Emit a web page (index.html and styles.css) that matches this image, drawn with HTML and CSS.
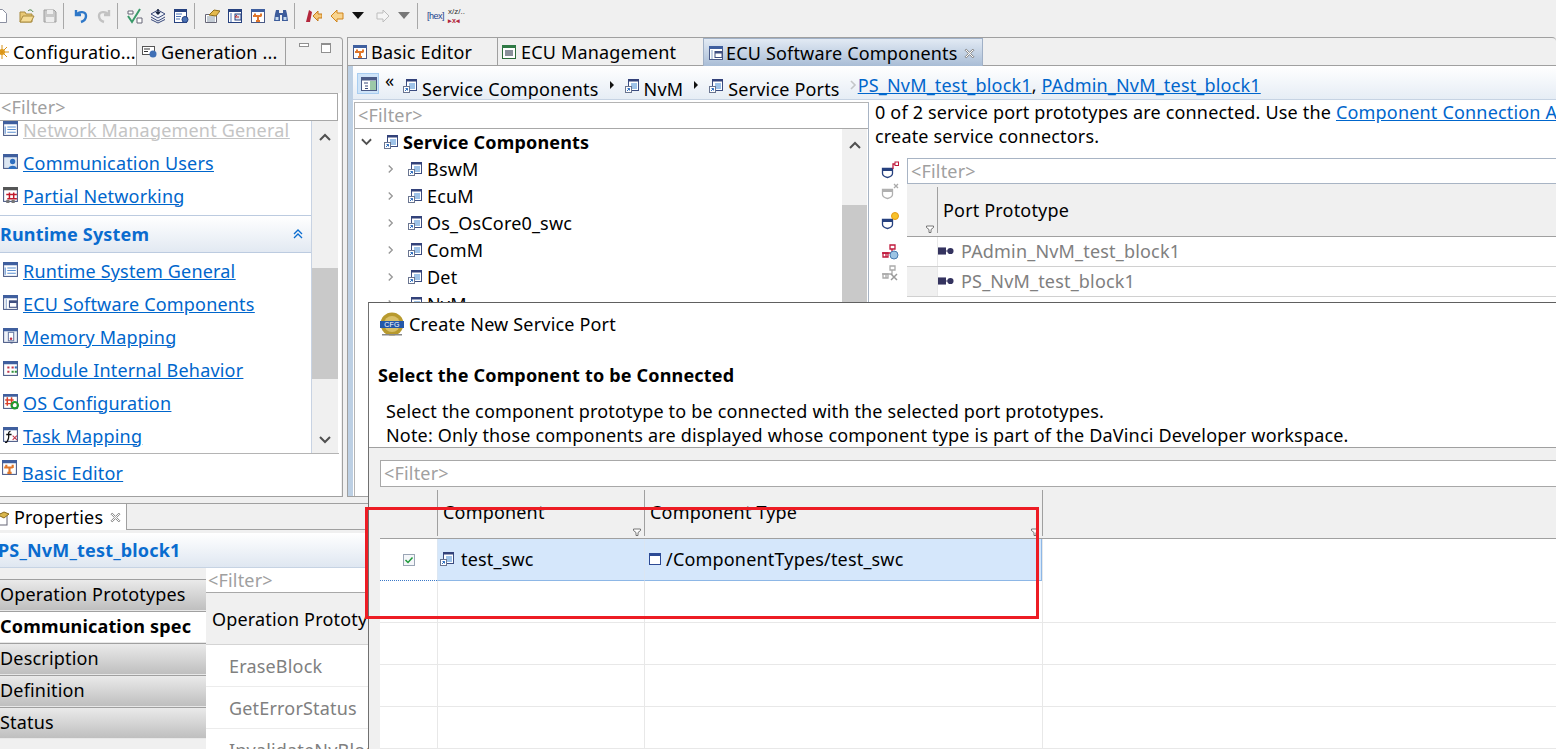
FILE: index.html
```html
<!DOCTYPE html>
<html lang="en">
<head>
<meta charset="utf-8">
<title>Create New Service Port</title>
<link rel="stylesheet" href="styles.css">
</head>
<body>
<svg class="defs" width="0" height="0" aria-hidden="true">
  <symbol id="win" viewBox="0 0 16 16"><rect x="1.500" y="1.500" width="13" height="13" fill="#fff" stroke="#4a5a86"/><rect x="1" y="1" width="14" height="3" fill="#3f5f9f"/><path d="M5 6.500h8M5 9h8M5 11.500h8M3 6v7" stroke="#5b8fd0" fill="none"/></symbol>
  <symbol id="users" viewBox="0 0 16 16"><rect x="1.500" y="1.500" width="13" height="13" fill="#dce6f2" stroke="#4a5a86"/><rect x="1" y="1" width="14" height="3" fill="#3f5f9f"/><circle cx="10" cy="8" r="2.500" fill="#2f6fc0"/><path d="M6 15c0-4 8-4 8 0z" fill="#2f6fc0"/></symbol>
  <symbol id="net" viewBox="0 0 16 16"><rect x="1.500" y="1.500" width="13" height="13" fill="#fff" stroke="#4a5a86"/><rect x="1" y="1" width="14" height="3" fill="#555"/><path d="M4 8h10M7 6v6M11 6v6M5 12h9" stroke="#c01a2c" fill="none" stroke-width="1.400"/><rect x="4" y="13" width="3" height="3" fill="#777"/><rect x="9" y="13" width="3" height="3" fill="#777"/></symbol>
  <symbol id="ecu" viewBox="0 0 16 16"><rect x="1.500" y="1.500" width="13" height="13" fill="#fff" stroke="#4a5a86"/><rect x="1" y="1" width="14" height="3" fill="#3f5f9f"/><rect x="7" y="6.500" width="7" height="6" fill="#fff" stroke="#3f4f80"/><rect x="7" y="6.500" width="7" height="2" fill="#3f4f80"/><path d="M4 5v9" stroke="#8aa3c8"/></symbol>
  <symbol id="mem" viewBox="0 0 16 16"><rect x="1.500" y="1.500" width="13" height="13" fill="#eef2f8" stroke="#4a5a86"/><rect x="1" y="1" width="14" height="3" fill="#3f5f9f"/><rect x="6" y="5" width="5" height="8" fill="#fff" stroke="#6b7ca6"/><circle cx="8.500" cy="11" r="1.200" fill="#c0364a"/><path d="M8 15h2" stroke="#4a5a86"/></symbol>
  <symbol id="mod" viewBox="0 0 16 16"><rect x="1.500" y="1.500" width="13" height="13" fill="#fff" stroke="#4a5a86"/><rect x="1" y="1" width="14" height="3" fill="#3f5f9f"/><path d="M5 6h2v2H5zM9 6h2v2H9zM5 10h2v2H5z" fill="#c0364a"/><path d="M9 10h2v2H9zM12 10h2v2h-2z" fill="#2f8f3a"/><path d="M12 6h2v2h-2z" fill="#2f6fc0"/></symbol>
  <symbol id="os" viewBox="0 0 16 16"><rect x="1.500" y="1.500" width="13" height="13" fill="#fff" stroke="#4a5a86"/><rect x="1" y="1" width="14" height="2.500" fill="#3f5f9f"/><path d="M5 4v8M9 4v8M3 6.500h8M3 10h8" stroke="#d9402a" stroke-width="1.400" fill="none"/><circle cx="12" cy="11.500" r="3" fill="none" stroke="#1f9a2e" stroke-width="2"/></symbol>
  <symbol id="task" viewBox="0 0 16 16"><rect x="1.500" y="1.500" width="13" height="13" fill="#fff" stroke="#4a5a86"/><rect x="1" y="1" width="14" height="3" fill="#3f5f9f"/><path d="M8 5C5 5 7 9 6 12S4 16 3 15M4 8h5" stroke="#111" fill="none" stroke-width="1.200"/><path d="M10 9l4 4M14 9l-4 4" stroke="#c0364a" fill="none"/></symbol>
  <symbol id="editor" viewBox="0 0 16 16"><rect x="1.500" y="1.500" width="13" height="13" fill="#fff" stroke="#4a5a86"/><rect x="1" y="1" width="14" height="3" fill="#3f5f9f"/><path d="M3 8h8M8 8v5M5 5.500v3M11 5.500v3M6 13h4" stroke="#e0762a" stroke-width="2" fill="none"/></symbol>
  <symbol id="svc" viewBox="0 0 16 16"><rect x="4.500" y="1.500" width="10" height="11" fill="#fff" stroke="#3b4c80"/><rect x="4" y="1" width="11" height="2.500" fill="#33427a"/><path d="M7 6h6M7 8h6M7 10h6" stroke="#3e87d2"/><rect x="1.500" y="8.500" width="6" height="6" fill="#fff" stroke="#6a7590"/><path d="M3 13l2.500-2.500M3.500 10.500h2v2" stroke="#2f6fc0" fill="none"/></symbol>
  <symbol id="comp" viewBox="0 0 16 16"><rect x="2.500" y="2.500" width="11" height="11" fill="#fff" stroke="#2c4a94"/><rect x="2" y="2" width="12" height="3" fill="#2c4a94"/></symbol>
  <symbol id="funnel" viewBox="0 0 8 8"><path d="M.5 1h7v1.500L5 4.500V7.500H3V4.500L.5 2.500z" fill="#fff" stroke="#555" stroke-width=".8"/></symbol>
  <symbol id="close" viewBox="0 0 10 10"><path d="M2 1l3 3 3-3 1 1-3 3 3 3-1 1-3-3-3 3-1-1 3-3-3-3z" fill="#fff" stroke="#777" stroke-width=".8"/></symbol>
  <symbol id="up" viewBox="0 0 12 8"><path d="M1 7l5-5 5 5" fill="none" stroke="#505050" stroke-width="2"/></symbol>
  <symbol id="down" viewBox="0 0 12 8"><path d="M1 1l5 5 5-5" fill="none" stroke="#505050" stroke-width="2"/></symbol>
  <symbol id="chev" viewBox="0 0 8 10"><path d="M2 1l4 4-4 4" fill="none" stroke="#999" stroke-width="1.600"/></symbol>
  <symbol id="tri" viewBox="0 0 6 10"><path d="M1 1l4 4-4 4z" fill="#111"/></symbol>
  <symbol id="port" viewBox="0 0 18 10"><rect x="0" y="1" width="9" height="8" fill="#34335f"/><path d="M9 5h3" stroke="#34335f"/><circle cx="14" cy="5" r="3.500" fill="#34335f"/></symbol>
  <symbol id="shield" viewBox="0 0 18 18"><path d="M1.500 7.500h10v5c0 2-3 3.500-5 4-2-.5-5-2-5-4z" fill="#fff" stroke="currentColor" stroke-width="1.300"/><path d="M1.500 7.500h10v2.500h-10z" fill="currentColor"/></symbol>
</svg>

<header class="toolbar">
  <svg class="tool tool-new" viewBox="0 0 16 16"><path d="M1.500 1.500h9l4 4v9h-13z" fill="#fff" stroke="#8a8fa0"/></svg>
  <svg class="tool" viewBox="0 0 16 16"><path d="M1 14V4h5l1 2h6v8z" fill="#e8c875" stroke="#a98b3f"/><path d="M1 14l3-6h11l-3 6z" fill="#f5dc95" stroke="#a98b3f"/><path d="M9 3c2-2 4-1 5 1" stroke="#3a7a3a" fill="none"/></svg>
  <svg class="tool" viewBox="0 0 16 16"><path d="M2 2h10l2 2v10H2z" fill="#c9c9c9" stroke="#a0a0a0"/><rect x="5" y="2" width="6" height="4" fill="#eee"/><rect x="4" y="9" width="8" height="5" fill="#eee"/></svg>
  <i class="sep"></i>
  <svg class="tool" viewBox="0 0 16 16"><path d="M3 2v5h5M3.500 7C6 3 13 3 13 8c0 3-2 5-5 6" fill="none" stroke="#2f78c8" stroke-width="2.400"/></svg>
  <svg class="tool" viewBox="0 0 16 16"><path d="M13 2v5H8M12.500 7C10 3 3 3 3 8c0 3 2 5 5 6" fill="none" stroke="#c2c2c2" stroke-width="2.400"/></svg>
  <i class="sep"></i>
  <svg class="tool" viewBox="0 0 16 16"><path d="M1 8l4 6 8-13" fill="none" stroke="#3a9a6a" stroke-width="2"/><path d="M1 3h5v3H1zM10 10h5v5h-5z" fill="#fff" stroke="#667"/></svg>
  <svg class="tool" viewBox="0 0 16 16"><path d="M1 6l7-4 7 4-7 4zM1 9l7 4 7-4M1 11.500l7 3.500 7-3.500" fill="#eef2f8" stroke="#39497a"/><path d="M8 1v5M6 4l2 2 2-2" stroke="#16233f" fill="none" stroke-width="1.500"/></svg>
  <svg class="tool" viewBox="0 0 16 16"><rect x="1.500" y="1.500" width="12" height="13" fill="#fff" stroke="#26417f"/><rect x="1" y="1" width="13" height="3" fill="#26417f"/><path d="M3 6h6M3 8.500h5M3 11h4" stroke="#4a72b5"/><circle cx="12" cy="11.500" r="3" fill="#4a72b5" stroke="#26417f"/></svg>
  <i class="sep"></i>
  <svg class="tool" viewBox="0 0 16 16"><path d="M1.500 6.500h11v8h-11z" fill="#fff" stroke="#667"/><path d="M3 9h8M3 11h8M3 13h8" stroke="#89a"/><path d="M5 7l5-5 6 1-4 5z" fill="#e4b94c" stroke="#8e6d1c"/></svg>
  <svg class="tool" viewBox="0 0 16 16"><rect x="1.500" y="1.500" width="13" height="13" fill="#fff" stroke="#26417f"/><rect x="1" y="1" width="14" height="3" fill="#26417f"/><rect x="8" y="6" width="6" height="6" fill="#dde6f2" stroke="#26417f"/><path d="M4 5v9" stroke="#4a72b5"/><path d="M12 9H8l2-2" stroke="#c02a2a" fill="none"/></svg>
  <svg class="tool" viewBox="0 0 16 16"><use href="#editor"/></svg>
  <svg class="tool" viewBox="0 0 16 16"><path d="M2 6l1-4h3v3h4V2h3l1 4 1 7H9V7H7v6H1z" fill="#3d5c9b"/><rect x="2.500" y="9" width="3" height="3" fill="#c7dbef"/><rect x="10.500" y="9" width="3" height="3" fill="#c7dbef"/></svg>
  <i class="sep"></i>
  <svg class="tool tool-wide" viewBox="0 0 18 16"><path d="M2 14L5 2l3 2-2 10z" fill="#b3273c"/><path d="M9 8l5-5v3h4v4h-4v3z" fill="#f5c879" stroke="#c67a18"/></svg>
  <svg class="tool" viewBox="0 0 16 16"><path d="M2 8l6-6v3h6v6H8v3z" fill="#f8d48f" stroke="#d08318"/></svg>
  <span class="drop"></span>
  <svg class="tool" viewBox="0 0 16 16"><path d="M14 8L8 2v3H2v6h6v3z" fill="#f5f5f5" stroke="#bdbdbd"/></svg>
  <span class="drop drop-off"></span>
  <i class="sep"></i>
  <span class="hex">[hex]</span>
  <span class="xz">x/z/..<b>▸x◂</b></span>
</header>

<main class="workbench">
  <section class="view view-config">
    <div class="tabstrip">
      <div class="tab tab-active tab-config"><svg class="ic ic-sun" viewBox="0 0 16 16"><circle cx="8" cy="8" r="3" fill="#e5a52c"/><path d="M8 1v14M1 8h14M3 3l10 10M13 3L3 13" stroke="#d99317"/></svg>Configuratio...</div>
      <div class="tab tab-gen"><svg class="ic" viewBox="0 0 16 16"><rect x="0.500" y="2.500" width="12" height="8" fill="#fff" stroke="#555"/><path d="M2 5h6M2 7.500h4" stroke="#333"/><circle cx="11" cy="10" r="3.500" fill="#3f6fb5"/></svg>Generation ...</div>
      <div class="winbtns"><i class="btn-min"></i><i class="btn-max"></i></div>
    </div>
    <div class="config-body">
      <div class="filter filter-config">&lt;Filter&gt;</div>
      <div class="config-scroll">
        <div class="nav">
          <a class="nav-row nav-first"><svg class="ic"><use href="#win"/></svg><span class="faded">Network Management General</span></a>
          <a class="nav-row"><svg class="ic"><use href="#users"/></svg><span>Communication Users</span></a>
          <a class="nav-row"><svg class="ic"><use href="#net"/></svg><span>Partial Networking</span></a>
          <h3 class="nav-head">Runtime System<svg class="dbl" viewBox="0 0 10 10"><path d="M1 5l4-4 4 4M1 9l4-4 4 4" fill="none" stroke="#0a6ccf" stroke-width="1.300"/></svg></h3>
          <a class="nav-row nav-after-head"><svg class="ic"><use href="#win"/></svg><span>Runtime System General</span></a>
          <a class="nav-row"><svg class="ic"><use href="#ecu"/></svg><span>ECU Software Components</span></a>
          <a class="nav-row"><svg class="ic"><use href="#mem"/></svg><span>Memory Mapping</span></a>
          <a class="nav-row"><svg class="ic"><use href="#mod"/></svg><span>Module Internal Behavior</span></a>
          <a class="nav-row"><svg class="ic"><use href="#os"/></svg><span>OS Configuration</span></a>
          <a class="nav-row"><svg class="ic"><use href="#task"/></svg><span>Task Mapping</span></a>
        </div>
        <div class="vbar vbar-config">
          <svg class="arrow"><use href="#up"/></svg>
          <div class="thumb thumb-config"></div>
          <svg class="arrow arrow-end"><use href="#down"/></svg>
        </div>
      </div>
      <a class="nav-row nav-foot"><svg class="ic"><use href="#editor"/></svg><span>Basic Editor</span></a>
    </div>
  </section>

  <section class="view view-editor">
    <div class="tabstrip">
      <div class="tab tab-basic"><svg class="ic"><use href="#editor"/></svg>Basic Editor</div>
      <div class="tab tab-mgmt"><svg class="ic" viewBox="0 0 16 16"><rect x="1.500" y="1.500" width="13" height="13" fill="#fff" stroke="#2d6a3a"/><rect x="1" y="1" width="14" height="3" fill="#2f7a45"/><rect x="4" y="6" width="8" height="6" fill="#8a8f9a"/></svg>ECU Management</div>
      <div class="tab tab-sw"><svg class="ic"><use href="#ecu"/></svg>ECU Software Components<svg class="x"><use href="#close"/></svg></div>
    </div>
    <div class="editor-frame">
      <div class="crumbs">
        <span class="crumb-btn"><svg viewBox="0 0 16 14" width="16" height="14"><rect x=".5" y=".5" width="15" height="13" fill="#fff" stroke="#4a5a86"/><rect x="1" y="1" width="14" height="2.500" fill="#4a5a86"/><rect x="9" y="4" width="6" height="9" fill="#9cc8a8"/><path d="M3 6h4M4 9h3M4 11.500h3" stroke="#39497a"/></svg></span>
        <span class="crumb-back">«</span>
        <svg class="ic ic-crumb"><use href="#svc"/></svg><span class="crumb">Service Components</span>
        <svg class="tri"><use href="#tri"/></svg>
        <svg class="ic ic-crumb"><use href="#svc"/></svg><span class="crumb">NvM</span>
        <svg class="tri"><use href="#tri"/></svg>
        <svg class="ic ic-crumb"><use href="#svc"/></svg><span class="crumb">Service Ports</span>
        <svg class="tri tri-off"><use href="#chev"/></svg>
        <span class="crumb-links"><a>PS_NvM_test_block1</a>, <a>PAdmin_NvM_test_block1</a></span>
      </div>
      <div class="editor-split">
        <div class="tree-pane">
          <div class="filter filter-tree">&lt;Filter&gt;</div>
          <div class="tree-scroll">
            <ul class="tree">
              <li class="tree-root"><svg class="twist"><use href="#down"/></svg><svg class="ic"><use href="#svc"/></svg><b>Service Components</b></li>
              <li><svg class="twist twist-r"><use href="#chev"/></svg><svg class="ic"><use href="#svc"/></svg>BswM</li>
              <li><svg class="twist twist-r"><use href="#chev"/></svg><svg class="ic"><use href="#svc"/></svg>EcuM</li>
              <li><svg class="twist twist-r"><use href="#chev"/></svg><svg class="ic"><use href="#svc"/></svg>Os_OsCore0_swc</li>
              <li><svg class="twist twist-r"><use href="#chev"/></svg><svg class="ic"><use href="#svc"/></svg>ComM</li>
              <li><svg class="twist twist-r"><use href="#chev"/></svg><svg class="ic"><use href="#svc"/></svg>Det</li>
              <li><svg class="twist twist-r"><use href="#chev"/></svg><svg class="ic"><use href="#svc"/></svg>NvM</li>
            </ul>
            <div class="vbar vbar-tree">
              <svg class="arrow"><use href="#up"/></svg>
              <div class="thumb thumb-tree"></div>
            </div>
          </div>
        </div>
        <div class="ports-pane">
          <p class="ports-note">0 of 2 service port prototypes are connected. Use the <a>Component Connection Assistant</a> to<br>create service connectors.</p>
          <div class="ports-body">
            <div class="ports-tools">
              <svg class="ptool ptool-red" viewBox="0 0 18 18"><use href="#shield"/><path d="M12 8V3h3.500" fill="none" stroke="#c0193c" stroke-width="1.300"/><rect x="14" y="1" width="3.500" height="3.500" fill="#fff" stroke="#c0193c"/></svg>
              <svg class="ptool ptool-off" viewBox="0 0 18 18"><use href="#shield"/><path d="M13 2l4 4M17 2l-4 4" stroke="#aaa" stroke-width="1.300"/></svg>
              <svg class="ptool ptool-new" viewBox="0 0 18 18"><use href="#shield"/><circle cx="14" cy="4" r="3.500" fill="#f7c22b" stroke="#e59a14"/></svg>
              <svg class="ptool ptool-tree" viewBox="0 0 18 18"><path d="M2 15h5v-4h-5zM9 3h5v4H9z" fill="#fff" stroke="#c0193c" stroke-width="1.300"/><path d="M11 7v4H1M5 11v4" stroke="#c0193c" stroke-width="1.300" fill="none"/><circle cx="13" cy="13" r="4" fill="#9cc4e4" stroke="#4a7cb0"/></svg>
              <svg class="ptool ptool-tree2" viewBox="0 0 18 18"><path d="M2 15h5v-4h-5zM9 3h5v4H9z" fill="#fff" stroke="#aaa" stroke-width="1.300"/><path d="M11 7v4H1M5 11v4" stroke="#aaa" stroke-width="1.300" fill="none"/><path d="M10 11l6 6M16 11l-6 6" stroke="#999" stroke-width="1.500"/></svg>
            </div>
            <div class="ports-table">
              <div class="filter filter-ports">&lt;Filter&gt;</div>
              <div class="ports-head"><span class="ports-corner"><svg class="fun"><use href="#funnel"/></svg></span><span class="ports-title">Port Prototype</span></div>
              <div class="ports-row"><span class="ports-cell"></span><svg class="port"><use href="#port"/></svg>PAdmin_NvM_test_block1</div>
              <div class="ports-row"><span class="ports-cell ports-cell-grey"></span><svg class="port"><use href="#port"/></svg>PS_NvM_test_block1</div>
            </div>
          </div>
        </div>
      </div>
    </div>
  </section>

  <section class="view view-props">
    <div class="tabstrip tabstrip-props">
      <div class="tab tab-active tab-prop"><svg class="ic ic-prop" viewBox="0 0 16 16"><rect x="1" y="4" width="12" height="11" fill="#fff" stroke="#667"/><path d="M4 5l6-3 5 2-5 4z" fill="#d9b64c" stroke="#8a6a1c"/></svg>Properties<svg class="x"><use href="#close"/></svg></div>
    </div>
    <div class="props-title">PS_NvM_test_block1</div>
    <div class="props-body">
      <div class="side-tabs">
        <div class="side-tab">Operation Prototypes</div>
        <div class="side-tab side-tab-on">Communication spec</div>
        <div class="side-tab">Description</div>
        <div class="side-tab">Definition</div>
        <div class="side-tab">Status</div>
      </div>
      <div class="props-main">
        <div class="filter filter-props">&lt;Filter&gt;</div>
        <div class="props-head">Operation Prototypes</div>
        <div class="props-row">EraseBlock</div>
        <div class="props-row">GetErrorStatus</div>
        <div class="props-row">InvalidateNvBlock</div>
      </div>
    </div>
  </section>
</main>

<section class="dialog">
  <div class="dialog-top">
    <div class="dialog-title">
      <svg class="cfg" viewBox="0 0 24 24"><circle cx="12" cy="12" r="11.500" fill="#b89a2e"/><circle cx="12" cy="12" r="8" fill="#d9c068"/><rect x="0" y="9" width="24" height="7" fill="#2458a8"/><rect x="2" y="22" width="20" height="1.500" fill="#888"/><text x="12" y="15" class="cfg-text">CFG</text></svg>
      Create New Service Port
    </div>
    <h2 class="dialog-head">Select the Component to be Connected</h2>
    <p class="dialog-text">Select the component prototype to be connected with the selected port prototypes.<br>Note: Only those components are displayed whose component type is part of the DaVinci Developer workspace.</p>
  </div>
  <div class="dialog-lower">
    <div class="filter filter-dialog">&lt;Filter&gt;</div>
    <div class="dtable">
      <div class="dhead">
        <span class="dcol"></span>
        <span class="dcol dcol-sep">Component<svg class="fun"><use href="#funnel"/></svg></span>
        <span class="dcol dcol-sep">Component Type<svg class="fun"><use href="#funnel"/></svg></span>
        <span class="dcol dcol-sep"></span>
      </div>
      <div class="drow drow-on">
        <span class="dcell dcell-check"><svg class="check" viewBox="0 0 12 12"><rect x=".5" y=".5" width="11" height="11" fill="#f4f6f9" stroke="#9aa5b5"/><path d="M2.500 6l2.500 2.500 4.500-5" fill="none" stroke="#1f9a3a" stroke-width="1.500"/></svg></span>
        <span class="dcell dcell-sel"><svg class="ic ic-sw"><use href="#svc"/></svg>test_swc</span>
        <span class="dcell dcell-sel dcell-type"><svg class="ic ic-type"><use href="#comp"/></svg>/ComponentTypes/test_swc</span>
        <span class="dcell"></span>
      </div>
      <div class="drow"><span class="dcell"></span><span class="dcell"></span><span class="dcell"></span><span class="dcell"></span></div>
      <div class="drow"><span class="dcell"></span><span class="dcell"></span><span class="dcell"></span><span class="dcell"></span></div>
      <div class="drow"><span class="dcell"></span><span class="dcell"></span><span class="dcell"></span><span class="dcell"></span></div>
      <div class="drow"><span class="dcell"></span><span class="dcell"></span><span class="dcell"></span><span class="dcell"></span></div>
    </div>
  </div>
</section>
<div class="redbox"></div>
</body>
</html>
```

FILE: styles.css
```css
* { box-sizing: border-box; }
html, body { margin: 0; height: 749px; overflow: hidden; }
body {
  position: relative;
  width: 1556px;
  background: #f0f0f0;
  color: #000;
  font: 18px/24px "Noto Sans", "Open Sans", sans-serif;
  letter-spacing: .18px;
}
.defs { position: absolute; }
a { color: #0066cc; text-decoration: underline; }
h2, h3, p, ul { margin: 0; padding: 0; }
svg { display: block; flex: none; }

.toolbar { height: 37px; display: flex; align-items: center; gap: 7px; padding: 0 0 6px; overflow: hidden; }
.tool { width: 16px; height: 16px; }
.tool-new { margin-left: -8px; margin-right: 4px; }
.tool-wide { width: 18px; }
.sep { width: 1px; height: 26px; background: #a8a8a8; margin: 0 2px 0 -2px; flex: none; }
.drop { width: 0; height: 0; border: 6px solid transparent; border-top: 7px solid #111; border-bottom: 0; margin-right: 4px; flex: none; }
.drop-off { border-top-color: #777; margin-right: 2px; }
.hex { width: 16px; font: 9px/14px "Liberation Sans", sans-serif; color: #1c3f8e; letter-spacing: -.5px; white-space: nowrap; }
.xz { width: 20px; margin-left: -2px; font: 8px/9px "Liberation Sans", sans-serif; letter-spacing: 0; color: #333; white-space: nowrap; }
.xz b { display: block; color: #b3273c; font-size: 7px; }

.workbench { display: grid; grid-template-columns: 343px 1fr; grid-template-rows: 460px 1fr; column-gap: 4px; row-gap: 6px; height: 712px; }
.view { background: #f0f0f0; border: 1px solid #a0a0a0; border-radius: 0 4px 0 0; overflow: hidden; min-width: 0; }
.view-config { border-left: 0; }
.view-props { grid-column: 1 / -1; border: 0; border-radius: 0; }
.view-editor { border-right: 0; }

.tabstrip { height: 28px; display: flex; border-bottom: 1px solid #a0a0a0; line-height: 27px; white-space: nowrap; }
.tab { display: flex; align-items: center; gap: 3px; height: 27px; padding-top: 1px; overflow: hidden; }
.ic { width: 16px; height: 16px; }
.tab-active { background: #fff; }
.tab-config { width: 137px; border-right: 1px solid #a0a0a0; }
.ic-sun { margin-left: -6px; }
.tab-gen { width: 149px; padding-left: 5px; border-right: 1px solid #a0a0a0; }
.winbtns { display: flex; gap: 12px; padding: 5px 0 0 13px; }
.btn-min { width: 10px; height: 4px; border: 1px solid #909090; background: #fff; }
.btn-max { width: 10px; height: 10px; border: 1px solid #909090; border-top-width: 2px; background: #fff; }

.filter { background: #fff; color: #a0a0a0; white-space: nowrap; overflow: hidden; }

.config-body { height: 431px; background: #fff; margin-right: 1px; border-top: 27px solid #f0f0f0; }
.filter-config { height: 28px; margin: 0 3px 0 -2px; padding-left: 2px; border: 1px solid #a8a8a8; line-height: 27px; }
.config-scroll { height: 333px; display: flex; border-bottom: 1px solid #b4b4b4; overflow: hidden; margin-right: 2px; }
.nav { width: 312px; border-right: 1px solid #c8d3e3; background: #fff; flex: none; height: 332px; overflow: hidden; }
.nav-row { display: flex; height: 33px; padding: 0 0 4px 2px; gap: 4px; align-items: center; }
.nav-row .ic { width: 17px; height: 17px; align-self: flex-start; margin-top: 5px; }
.nav-row span { text-decoration: underline; white-space: nowrap; }
.nav-first { margin-top: -6px; }
.faded { color: #c4c4c4; }
.nav-head {
  height: 38px; margin-top: 1px; display: flex; align-items: center; justify-content: space-between;
  padding: 0 8px 0 0; font-size: 18px; font-weight: 700; color: #0a6ccf;
  background: linear-gradient(#fff, #e2e9f2);
  border-top: 1px solid #bccbe0; border-bottom: 1px solid #bccbe0;
}
.dbl { width: 10px; height: 10px; }
.nav-after-head { margin-top: 3px; }
.nav-foot { height: 42px; padding-left: 1px; }

.vbar { background: #f0f0f0; display: flex; flex-direction: column; align-items: center; }
.vbar-config { width: 26px; }
.arrow { width: 12px; height: 8px; margin-top: 12px; }
.arrow-end { margin-top: 57px; }
.thumb { background: #c9c9c9; width: 100%; }
.thumb-config { height: 111px; margin-top: 127px; }

.tabstrip-props { height: 27px; border-top: 1px solid #a0a0a0; }
.tab-prop { width: 127px; height: 26px; padding-right: 4px; border-right: 1px solid #a0a0a0; }
.ic-prop { margin-left: -6px; margin-right: 1px; }
.x { width: 11px; height: 11px; margin-left: 4px; }
.props-title { height: 35px; margin-top: 3px; font-weight: 700; line-height: 34px; color: #0a6ccf; background: linear-gradient(#fff, #dfe7f1); border-bottom: 1px solid #c6d3e3; text-indent: -2px; }
.props-body { display: grid; grid-template-columns: 206px 1fr; }
.side-tabs { padding-top: 11px; }
.side-tab { height: 32px; line-height: 28px; background: linear-gradient(#eaeaea, #bfbfbf); border-top: 1px solid #a0a0a0; border-bottom: 1px solid #e8e8e8; white-space: nowrap; }
.side-tab-on { background: #fff; font-weight: 700; }
.props-main { background: #fff; overflow: hidden; }
.filter-props { height: 25px; padding-left: 2px; border-bottom: 1px solid #a8a8a8; line-height: 24px; }
.props-head { height: 52px; background: #f0f0f0; padding-left: 6px; line-height: 52px; white-space: nowrap; border-bottom: 1px solid #d4d4d4; }
.props-row { height: 42px; padding-left: 23px; line-height: 43px; color: #808080; border-bottom: 1px solid #ececec; white-space: nowrap; }

.tab-basic { width: 150px; padding-left: 4px; border-right: 1px solid #a0a0a0; }
.tab-mgmt { width: 206px; padding-left: 3px; border-right: 1px solid #a0a0a0; gap: 4px; }
.tab-sw { width: 280px; padding-left: 4px; gap: 2px; background: linear-gradient(#e2eaf4, #a9bdd6); border: 1px solid #a0b0c6; border-bottom: 0; margin-left: -1px; height: 28px; }
.editor-frame { border-left: 5px solid #bdd0e4; background: #fff; height: 431px; }
.crumbs { height: 34px; display: flex; align-items: flex-start; padding: 7px 0 0 4px; background: linear-gradient(#fff, #e6edf5); border-bottom: 1px solid #c6d3e3; overflow: hidden; white-space: nowrap; }
.crumb-btn { width: 22px; height: 21px; padding: 3px; background: #cfe4f8; border: 1px solid #a8cdf0; flex: none; }
.crumb-back { width: 23px; padding-left: 6px; line-height: 14px; flex: none; }
.ic-crumb { margin-top: 5px; margin-right: 4px; }
.crumb { line-height: 27px; margin-top: 3px; }
.tri { width: 6px; height: 10px; margin: 7px 9px 0 10px; }
.tri-off { width: 8px; opacity: .5; margin: 7px 1px 0 9px; }
.crumb-links { line-height: 24px; }

.editor-split { display: grid; grid-template-columns: 515px 1fr; padding-left: 1px; height: 397px; }
.tree-pane { margin-top: 2px; border: 1px solid #b4b4b4; border-right-color: #a8b4c4; background: #fff; }
.filter-tree { height: 26px; padding-left: 3px; border-bottom: 1px solid #a8a8a8; line-height: 25px; }
.tree-scroll { display: flex; height: 174px; overflow: hidden; }
.tree { list-style: none; width: 487px; flex: none; margin-top: -1px; }
.tree li { display: flex; align-items: center; height: 27px; padding-left: 33px; white-space: nowrap; }
.tree li .ic { margin-right: 4px; }
.tree .tree-root { padding-left: 6px; }
.twist { width: 11px; height: 8px; margin-right: 11px; }
.twist-r { width: 7px; height: 10px; margin-right: 13px; margin-left: -1px; }
.vbar-tree { width: 25px; }
.arrow + .thumb-tree { height: 200px; margin-top: 56px; }

.ports-pane { min-width: 0; padding-left: 3px; overflow: hidden; }
.ports-note { padding-left: 3px; white-space: nowrap; }
.ports-body { display: grid; grid-template-columns: 35px 1fr; margin-top: 10px; }
.ports-tools { padding-top: 3px; padding-left: 9px; color: #26417f; }
.ptool { width: 18px; height: 18px; }
.ptool-off { color: #b0b0b0; margin-top: 3px; }
.ptool-new { margin-top: 12px; }
.ptool-tree { margin-top: 12px; }
.ptool-tree2 { margin-top: 3px; }
.filter-ports { height: 26px; padding-left: 3px; border: 1px solid #a8b4c4; border-right: 0; line-height: 25px; }
.ports-head { height: 53px; display: flex; background: #f0f0f0; border-bottom: 1px solid #a0a0a0; padding-top: 3px; }
.ports-corner { position: relative; width: 31px; height: 46px; border-right: 1px solid #a0a0a0; flex: none; }
.ports-corner .fun { position: absolute; right: 3px; bottom: 0; }
.fun { width: 8px; height: 8px; }
.ports-title { padding-left: 5px; line-height: 47px; }
.ports-row { height: 30px; display: flex; align-items: center; padding-bottom: 1px; color: #808080; background: #fff; border-bottom: 1px solid #d0d0d0; white-space: nowrap; }
.ports-cell { width: 31px; height: 29px; margin-top: 1px; border-right: 1px solid #e8e8e8; flex: none; }
.ports-cell-grey { background: #f0f0f0; }
.port { width: 16px; height: 10px; margin-right: 7px; }

.dialog { position: absolute; left: 368px; top: 302px; right: 0; bottom: 0; background: #f0f0f0; border-left: 1px solid #707070; border-top: 1px solid #606060; overflow: hidden; }
.dialog-top { height: 145px; background: #fff; border-bottom: 1px solid #a0a0a0; }
.dialog-title { height: 42px; display: flex; align-items: center; gap: 5px; padding: 0 0 0 11px; white-space: nowrap; }
.cfg { width: 24px; height: 24px; }
.cfg-text { font: 7px "Liberation Sans", sans-serif; fill: #fff; text-anchor: middle; }
.dialog-head { margin-top: 18px; padding-left: 9px; font-size: 18px; line-height: 24px; font-weight: 700; white-space: nowrap; }
.dialog-text { margin-top: 12px; padding-left: 17px; white-space: nowrap; }
.dialog-lower { padding: 12px 0 0 11px; }
.filter-dialog { height: 27px; padding-left: 3px; border: 1px solid #a8a8a8; border-right: 0; line-height: 24px; }
.dtable { background: #fff; }
.dhead, .drow { display: grid; grid-template-columns: 57px 207px 398px 1fr; }
.dhead { height: 52px; background: #f0f0f0; border-bottom: 1px solid #a0a0a0; padding-top: 3px; }
.dcol { position: relative; height: 46px; padding-left: 5px; line-height: 44px; white-space: nowrap; }
.dcol-sep { border-left: 1px solid #a0a0a0; }
.dcol .fun { position: absolute; right: 3px; bottom: 0; }
.drow { height: 42px; border-bottom: 1px solid #e8e8e8; }
.dcell { display: flex; align-items: center; border-left: 1px solid #e8e8e8; white-space: nowrap; }
.dcell:first-child { border-left: 0; }
.dcell-check { justify-content: center; padding-left: 1px; border-bottom: 1px dotted #3a78c8; }
.dcell-sel { background: #d5e7fb; padding: 0 0 2px 1px; border-bottom: 1px solid #8db7e6; gap: 6px; border-left-color: #dbe6f2; }
.dcell-type { border-right: 1px solid #8db7e6; padding-left: 2px; gap: 3px; }
.drow-on { border-bottom: 0; }
.check { width: 12px; height: 12px; }
.redbox { position: absolute; left: 365px; top: 507px; width: 674px; height: 112px; border: 3px solid #ed1c24; pointer-events: none; }
```
